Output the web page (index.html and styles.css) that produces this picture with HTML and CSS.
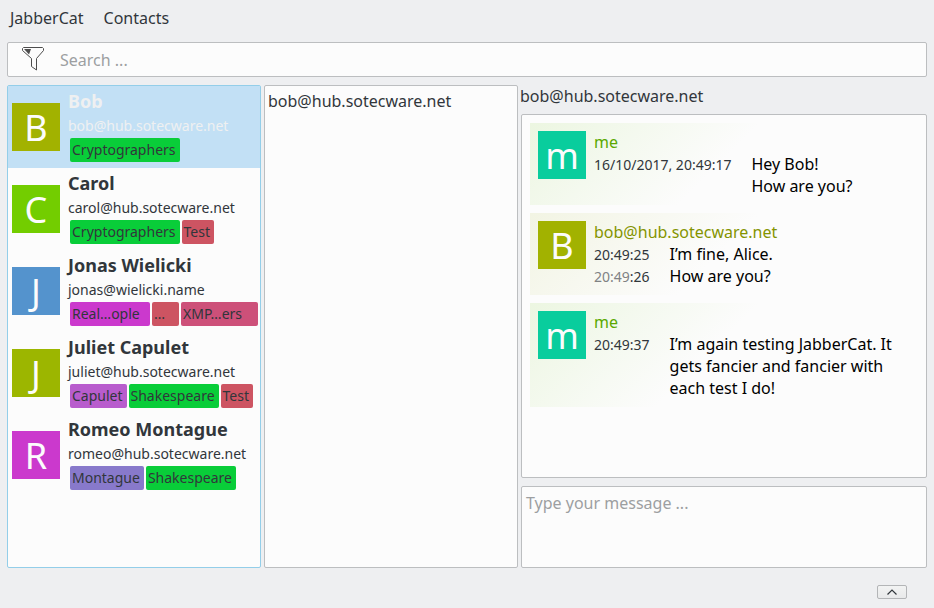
FILE: index.html
```html
<!DOCTYPE html>
<html lang="en">
<head>
<meta charset="utf-8">
<title>JabberCat</title>
<link rel="stylesheet" href="styles.css">
</head>
<body>
<nav class="menubar">
  <button type="button" class="menu">JabberCat</button>
  <button type="button" class="menu">Contacts</button>
</nav>

<label class="search">
  <svg class="filter-icon" width="24" height="27" viewBox="0 0 24 27" aria-hidden="true">
    <path d="M2.500 1.500H21.500L22.500 2.500V4.500L15.500 12.500V24L10.500 20.500V12.500L1.500 4.500V2.500Z" fill="none" stroke="#4d4d4d"/>
    <path d="M3 3H10L8 8.500Z" fill="#4d4d4d"/>
  </svg>
  <input type="search" placeholder="Search ..." aria-label="Search">
</label>

<main class="panes">
  <ul class="pane roster">
    <li class="contact selected">
      <span class="avatar olive">B</span>
      <div class="details">
        <h2>Bob</h2>
        <p>bob@hub.sotecware.net</p>
        <div class="tags"><span class="tag green">Cryptographers</span></div>
      </div>
    </li>
    <li class="contact">
      <span class="avatar lime">C</span>
      <div class="details">
        <h2>Carol</h2>
        <p>carol@hub.sotecware.net</p>
        <div class="tags"><span class="tag green">Cryptographers</span><span class="tag red">Test</span></div>
      </div>
    </li>
    <li class="contact">
      <span class="avatar blue">J</span>
      <div class="details">
        <h2>Jonas Wielicki</h2>
        <p>jonas@wielicki.name</p>
        <div class="tags shortened"><span class="tag magenta">Real…ople</span><span class="tag red">…</span><span class="tag rose">XMP…ers</span></div>
      </div>
    </li>
    <li class="contact">
      <span class="avatar moss">J</span>
      <div class="details">
        <h2>Juliet Capulet</h2>
        <p>juliet@hub.sotecware.net</p>
        <div class="tags"><span class="tag orchid">Capulet</span><span class="tag green">Shakespeare</span><span class="tag red">Test</span></div>
      </div>
    </li>
    <li class="contact">
      <span class="avatar magenta">R</span>
      <div class="details">
        <h2>Romeo Montague</h2>
        <p>romeo@hub.sotecware.net</p>
        <div class="tags"><span class="tag violet">Montague</span><span class="tag green">Shakespeare</span></div>
      </div>
    </li>
  </ul>

  <ul class="pane conversations">
    <li>bob@hub.sotecware.net</li>
  </ul>

  <section class="chat">
    <h1>bob@hub.sotecware.net</h1>
    <div class="pane log">
      <article class="message own">
        <span class="avatar teal">m</span>
        <div class="body">
          <h3>me</h3>
          <div class="lines">
            <time>16/10/2017, 20:49:17</time><p>Hey Bob!<br>How are you?</p>
          </div>
        </div>
      </article>
      <article class="message peer">
        <span class="avatar olive">B</span>
        <div class="body">
          <h3>bob@hub.sotecware.net</h3>
          <div class="lines">
            <time>20:49:25</time><p>I’m fine, Alice.</p>
            <time><span class="repeat">20:49</span>:26</time><p>How are you?</p>
          </div>
        </div>
      </article>
      <article class="message own">
        <span class="avatar teal">m</span>
        <div class="body">
          <h3>me</h3>
          <div class="lines">
            <time>20:49:37</time><p>I’m again testing JabberCat. It gets fancier and fancier with each test I do!</p>
          </div>
        </div>
      </article>
    </div>
    <textarea class="pane" placeholder="Type your message ..." aria-label="Message"></textarea>
  </section>
</main>

<footer>
  <button type="button" class="expand" aria-label="Expand">
    <svg width="12" height="8" viewBox="0 0 12 8" aria-hidden="true"><path d="M1.500 6.500L6 2L10.500 6.500" fill="none" stroke="#31363b" stroke-width="1.200"/></svg>
  </button>
</footer>
</body>
</html>
```

FILE: styles.css
```css
* {
  box-sizing: border-box;
  margin: 0;
  padding: 0;
}

body {
  display: flex;
  flex-direction: column;
  min-height: 100vh;
  padding: 0 7px;
  background: #eeeff1;
  color: #31363b;
  font: 16px/22px "Noto Sans", sans-serif;
}

button, input, textarea {
  font: inherit;
  color: inherit;
}

h1, h2, h3 {
  font-size: 16px;
  font-weight: 400;
}

ul {
  list-style: none;
}

.menubar {
  display: flex;
  gap: 20px;
  padding: 7px 3px 13px;
}

.menu {
  border: 0;
  background: none;
}

.search, .pane {
  border: 1px solid #bcbec0;
  border-radius: 2px;
  background: #fcfcfc;
}

.search {
  display: flex;
  align-items: center;
  gap: 15px;
  height: 35px;
  padding: 0 13px;
}

.search input {
  flex: 1;
  min-width: 0;
  border: 0;
  outline: 0;
  background: none;
}

::placeholder {
  color: #9d9fa1;
  opacity: 1;
}

.panes {
  flex: 1;
  display: grid;
  grid-template-columns: 254fr 254fr 406fr;
  gap: 3px;
  margin-top: 8px;
}

.pane.roster {
  border-color: #93cee9;
}

.contact {
  display: flex;
  align-items: center;
  gap: 8px;
  height: 82px;
  padding-left: 4px;
}

.selected {
  background: #c2e0f5;
  color: #eff0f1;
}

.avatar {
  flex: none;
  width: 48px;
  height: 48px;
  color: #fcfcfc;
  font-size: 36px;
  line-height: 50px;
  text-align: center;
}

.details {
  padding-bottom: 2px;
}

.contact h2 {
  margin-bottom: 2px;
  font-size: 18px;
  font-weight: 700;
  line-height: 22px;
}

.contact p {
  font-size: 14px;
  line-height: 24px;
}

.tags {
  display: flex;
  gap: 2px;
  padding-left: 2px;
}

.tag {
  padding: 0 4px 0 2px;
  border-radius: 2px;
  color: #31363b;
  font-size: 14px;
  line-height: 24px;
}

.shortened {
  display: grid;
  grid-template-columns: 80px 27px 77px;
}

.olive { background: #a2b200; }
.lime { background: #73cd00; }
.blue { background: #5493cd; }
.moss { background: #9cb600; }
.teal { background: #09cd9d; }
.magenta { background: #cb39cd; }
.green { background: #09cd39; }
.red { background: #cd5462; }
.rose { background: #cd5079; }
.orchid { background: #b85ccd; }
.violet { background: #8879cb; }

.conversations {
  padding: 4px 3px;
}

.chat {
  display: flex;
  flex-direction: column;
}

.chat h1 {
  margin: 0 -1px 7px;
}

.log {
  flex: 1;
  display: flex;
  flex-direction: column;
  gap: 8px;
  padding: 8px;
}

.message {
  display: flex;
  gap: 8px;
  padding: 8px;
}

.own {
  background: linear-gradient(135deg, #ecf6e1, #fcfcfc 163px);
}

.peer {
  background: linear-gradient(135deg, #f2f4e3, #fcfcfc 163px);
}

.own h3 { color: #5aa800; }
.peer h3 { color: #849400; }

.lines {
  display: grid;
  grid-template-columns: max-content 1fr;
  align-items: first baseline;
  column-gap: 20px;
  color: #000;
}

.lines time {
  color: #31363b;
  font-size: 14px;
  line-height: 20px;
}

.lines .repeat {
  color: #808284;
}

textarea {
  display: block;
  height: 82px;
  margin-top: 8px;
  padding: 5px 4px;
  resize: none;
  outline: 0;
}

footer {
  display: flex;
  justify-content: flex-end;
  align-items: center;
  height: 40px;
  padding: 8px 20px 0 0;
}

.expand {
  display: flex;
  align-items: center;
  justify-content: center;
  width: 30px;
  height: 14px;
  border: 1px solid #b3b5b7;
  border-radius: 2px;
  background: linear-gradient(#f2f3f3, #e8e9ea);
}
```
